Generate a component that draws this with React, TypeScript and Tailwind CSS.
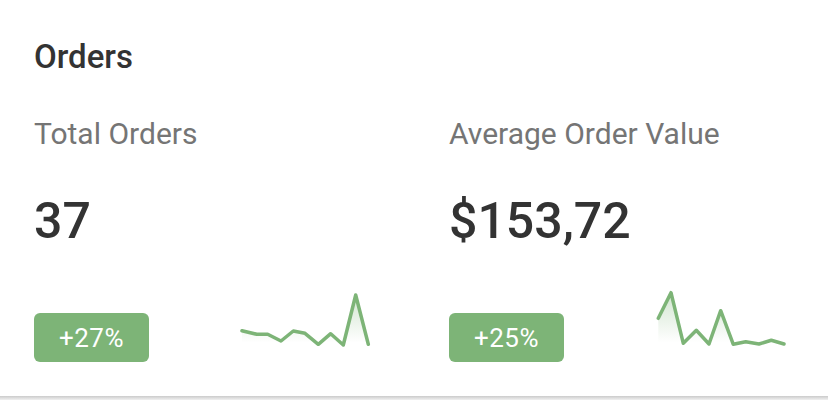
import React from "react";

type Stat = {
  label: string;
  value: string;
  change: string;
  points: [number, number][];
};

const stats: Stat[] = [
  {
    label: "Total Orders",
    value: "37",
    change: "+27%",
    points: [
      [2, 40.7], [16.7, 44.3], [27.7, 44.3], [41, 51], [53.3, 41], [65, 43.3],
      [78.3, 54.3], [90.7, 43.7], [103.3, 55], [115.7, 5], [128.3, 54.3],
    ],
  },
  {
    label: "Average Order Value",
    value: "$153,72",
    change: "+25%",
    points: [
      [3.3, 28.3], [16, 2.7], [28.3, 53.3], [41.3, 40.3], [54, 54], [65.7, 20.7],
      [78.3, 54.3], [90.7, 51.7], [104, 54], [116.3, 50.3], [129, 54],
    ],
  },
];

function Sparkline({ points, id }: { points: [number, number][]; id: string }) {
  const line = points.map(([x, y]) => `${x},${y}`).join(" ");
  const first = points[0];
  const last = points[points.length - 1];
  const area = `${first[0]},58 ${line} ${last[0]},58`;
  return (
    <svg width="134" height="58" viewBox="0 0 134 58" className="block">
      <defs>
        <linearGradient id={id} x1="0" y1="0" x2="0" y2="1">
          <stop offset="0%" stopColor="#7db477" stopOpacity="0.35" />
          <stop offset="90%" stopColor="#7db477" stopOpacity="0" />
        </linearGradient>
      </defs>
      <polygon points={area} fill={`url(#${id})`} />
      <polyline
        points={line}
        fill="none"
        stroke="#7db477"
        strokeWidth="3.5"
        strokeLinejoin="round"
        strokeLinecap="round"
      />
    </svg>
  );
}

export default function App() {
  return (
    <div
      className="flex h-[400px] w-[828px] flex-col bg-white"
      style={{ fontFamily: "Roboto, 'Liberation Sans', sans-serif" }}
    >
      <div className="flex-1 pl-[34px]">
        <h2 className="mt-[40px] text-[33px] font-medium leading-none text-[#333333]">Orders</h2>

        <div className="grid grid-cols-[415px_1fr]">
          {stats.map((s, i) => (
            <div key={s.label} className="flex flex-col">
              <div className="mt-[46px] text-[30px] leading-none text-[#757575]">{s.label}</div>
              <div className="mt-[47px] text-[50px] font-medium leading-none text-[#333333]">{s.value}</div>
              <div className="mt-[44px] flex items-start">
                <div className="mt-[23px] flex h-[49px] w-[115px] items-center justify-center rounded-[6px] bg-[#7db477] text-[26px] leading-none tracking-[0.5px] text-white">
                  {s.change}
                </div>
                <div className="ml-[91px]">
                  <Sparkline points={s.points} id={`spark-${i}`} />
                </div>
              </div>
            </div>
          ))}
        </div>
      </div>
      <div className="h-[4px] bg-gradient-to-b from-[#cbcbcb] to-[#f1f1f1]" />
    </div>
  );
}
